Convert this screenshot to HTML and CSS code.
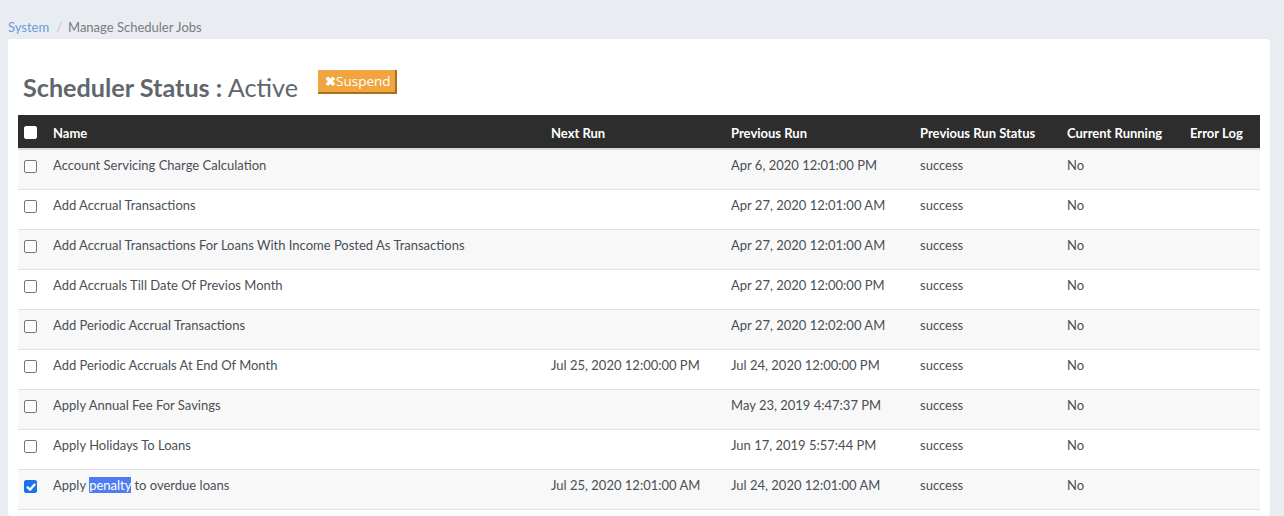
FILE: index.html
```html
<!DOCTYPE html>
<html>
<head>
<meta charset="utf-8">
<link rel="stylesheet" href="styles.css">
</head>
<body>
<nav class="crumbs"><a class="crumb-link">System</a><span class="crumb-sep">/</span><span class="crumb-cur">Manage Scheduler Jobs</span></nav>
<section class="card">
  <div class="head">
    <h1 class="title"><b>Scheduler Status :</b> Active</h1>
    <button class="btn-suspend"><span class="x">&#10006;</span>Suspend</button>
  </div>
  <table class="jobs">
    <thead>
      <tr><th class="c-chk"><span class="cb head-cb"></span></th><th class="c-name">Name</th><th class="c-next">Next Run</th><th class="c-prev">Previous Run</th><th class="c-stat">Previous Run Status</th><th class="c-cur">Current Running</th><th class="c-err">Error Log</th></tr>
    </thead>
    <tbody>
      <tr><td><span class="cb"></span></td><td>Account Servicing Charge Calculation</td><td></td><td>Apr 6, 2020 12:01:00 PM</td><td>success</td><td>No</td><td></td></tr>
      <tr><td><span class="cb"></span></td><td>Add Accrual Transactions</td><td></td><td>Apr 27, 2020 12:01:00 AM</td><td>success</td><td>No</td><td></td></tr>
      <tr><td><span class="cb"></span></td><td>Add Accrual Transactions For Loans With Income Posted As Transactions</td><td></td><td>Apr 27, 2020 12:01:00 AM</td><td>success</td><td>No</td><td></td></tr>
      <tr><td><span class="cb"></span></td><td>Add Accruals Till Date Of Previos Month</td><td></td><td>Apr 27, 2020 12:00:00 PM</td><td>success</td><td>No</td><td></td></tr>
      <tr><td><span class="cb"></span></td><td>Add Periodic Accrual Transactions</td><td></td><td>Apr 27, 2020 12:02:00 AM</td><td>success</td><td>No</td><td></td></tr>
      <tr><td><span class="cb"></span></td><td>Add Periodic Accruals At End Of Month</td><td>Jul 25, 2020 12:00:00 PM</td><td>Jul 24, 2020 12:00:00 PM</td><td>success</td><td>No</td><td></td></tr>
      <tr><td><span class="cb"></span></td><td>Apply Annual Fee For Savings</td><td></td><td>May 23, 2019 4:47:37 PM</td><td>success</td><td>No</td><td></td></tr>
      <tr><td><span class="cb"></span></td><td>Apply Holidays To Loans</td><td></td><td>Jun 17, 2019 5:57:44 PM</td><td>success</td><td>No</td><td></td></tr>
      <tr><td><span class="cb checked"><svg viewBox="0 0 14 14" width="14" height="14"><path d="M3.6 7.4 L6 9.7 L10.6 4.6" fill="none" stroke="#fff" stroke-width="2.3" stroke-linecap="round" stroke-linejoin="round"/></svg></span></td><td>Apply <span class="sel">penalty</span> to overdue loans</td><td>Jul 25, 2020 12:01:00 AM</td><td>Jul 24, 2020 12:01:00 AM</td><td>success</td><td>No</td><td></td></tr>
    </tbody>
  </table>
</section>
</body>
</html>
```

FILE: styles.css
```css
html, body { margin: 0; padding: 0; }
body {
  background: #e9ecf0;
  font-family: Lato, "Open Sans", sans-serif;
  color: #4a4f55;
  height: 516px;
  overflow: hidden;
}
.crumbs {
  font-size: 13px;
  padding: 18px 8px 0 8px;
  height: 21px;
  line-height: 18px;
}
.crumb-link { color: #6a9be0; }
.crumb-sep { color: #c2c6cc; margin: 0 6px 0 7px; }
.crumb-cur { color: #777c82; }
.card {
  background: #fff;
  margin: 0 14px 0 8px;
  border-radius: 3px;
  padding: 31px 10px 6px 10px;
  box-shadow: 0 0 2px rgba(0,0,0,0.05);
}
.head {
  display: flex;
  align-items: flex-start;
  padding-left: 5px;
  height: 45px;
}
.title {
  margin: 0;
  font-size: 25.2px;
  font-weight: 400;
  color: #5f666c;
  line-height: 34px;
}
.title b { font-weight: 700; }
.btn-suspend {
  margin-left: 20px;
  background: #f0a53e;
  color: #fff;
  border: none;
  border-right: 2px solid #a8701e;
  border-bottom: 2px solid #a8701e;
  font-family: "Open Sans", sans-serif;
  font-size: 13.5px;
  height: 24px;
  padding: 0 0 0 7px;
  line-height: 22px;
  width: 79px;
  text-align: left;
  white-space: nowrap;
}
.btn-suspend .x { font-size: 12.5px; font-weight: 700; margin-right: 0; }
.jobs {
  width: 100%;
  border-collapse: collapse;
  font-size: 13px;
}
.jobs thead tr { background: #2d2d2d; }
.jobs th {
  color: #fff;
  font-weight: 700;
  text-align: left;
  height: 31px;
  padding: 2px 0 0 0;
  border-bottom: 2px solid #d9dadc;
  vertical-align: middle;
}
.jobs td {
  height: 40px;
  padding: 0;
  vertical-align: top;
  line-height: 18px;
  padding-top: 6px;
  box-sizing: border-box;
  border-bottom: 1px solid #dfe1e4;
  color: #4a4f55;
}
.jobs tbody tr:nth-child(odd) { background: #f8f8f8; }
.jobs td:first-child, .jobs th:first-child { width: 29px; padding-left: 6px; }
.c-name { width: 498px; }
.c-next { width: 180px; }
.c-prev { width: 189px; }
.c-stat { width: 147px; }
.c-cur { width: 123px; }
.cb {
  display: inline-block;
  width: 11px;
  height: 11px;
  border: 1px solid #767676;
  border-radius: 2px;
  background: #fff;
  margin-top: 4px;
  position: relative;
  vertical-align: top;
}
.head-cb { margin-top: 1px; border-color: #fff; }
.cb.checked { background: #1a73e8; border-color: #1a73e8; }
.cb.checked svg { position: absolute; left: -1px; top: -1px; }
.sel { background: #4d7cf0; color: #fff; }
```
